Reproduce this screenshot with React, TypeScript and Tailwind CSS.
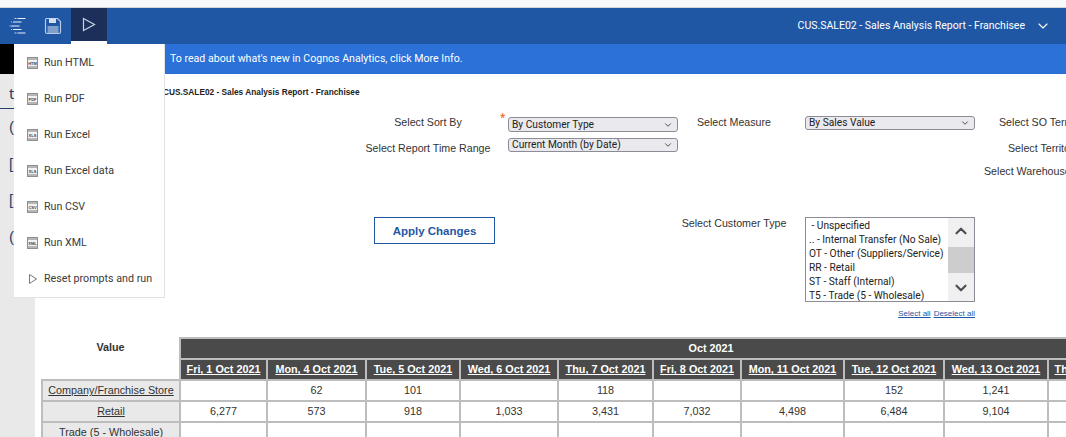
import { ChevronDown, ChevronUp } from "lucide-react"

const uiFont = "font-['Roboto',sans-serif]"
const reportFont = "font-['Liberation_Sans',Arial,sans-serif]"
const fieldFont = "font-['Roboto',sans-serif]"

const runItems = [
  { label: "Run HTML", tag: "HTM" },
  { label: "Run PDF", tag: "PDF" },
  { label: "Run Excel", tag: "XLS" },
  { label: "Run Excel data", tag: "XLS" },
  { label: "Run CSV", tag: "CSV" },
  { label: "Run XML", tag: "XML" },
]

const customerTypes = [
  "\u00a0- Unspecified",
  ".. - Internal Transfer (No Sale)",
  "OT - Other (Suppliers/Service)",
  "RR - Retail",
  "ST - Staff (Internal)",
  "T5 - Trade (5 - Wholesale)",
]

const dates = [
  { label: "Fri, 1 Oct 2021", w: "w-[87px]" },
  { label: "Mon, 4 Oct 2021", w: "w-[99px]" },
  { label: "Tue, 5 Oct 2021", w: "w-[94px]" },
  { label: "Wed, 6 Oct 2021", w: "w-[98px]" },
  { label: "Thu, 7 Oct 2021", w: "w-[95px]" },
  { label: "Fri, 8 Oct 2021", w: "w-[88px]" },
  { label: "Mon, 11 Oct 2021", w: "w-[103px]" },
  { label: "Tue, 12 Oct 2021", w: "w-[100px]" },
  { label: "Wed, 13 Oct 2021", w: "w-[104px]" },
  { label: "Thu, 14 Oct 2021", w: "w-[99px]" },
  { label: "Fri, 15 Oct 2021", w: "w-[95px]" },
]

const rows = [
  { name: "Company/Franchise Store", link: true, values: ["", "62", "101", "", "118", "", "", "152", "1,241", "", ""] },
  { name: "Retail", link: true, values: ["6,277", "573", "918", "1,033", "3,431", "7,032", "4,498", "6,484", "9,104", "", ""] },
  { name: "Trade (5 - Wholesale)", link: false, values: ["", "", "", "", "", "", "", "", "", "", ""] },
]

function FileIcon({ tag }: { tag: string }) {
  return (
    <svg width="12" height="12" viewBox="0 0 12 12" className="shrink-0">
      <rect x="0.5" y="0.5" width="10" height="11" fill="#f2f2f2" stroke="#8f8f8f" />
      <rect x="1" y="1" width="9" height="2" fill="#b5b5b5" />
      <rect x="1" y="9" width="9" height="2" fill="#b5b5b5" />
      <text x="5.5" y="7.6" textAnchor="middle" fontSize="4" fontWeight="700" fill="#444" fontFamily="Liberation Sans">
        {tag}
      </text>
    </svg>
  )
}

function RunMenu() {
  return (
    <div className={`absolute left-[14px] top-[44px] z-20 flex h-[254px] w-[151px] flex-col border-r border-b border-[#e2e2e2] bg-white pt-[1px] ${uiFont}`}>
      {runItems.map((item) => (
        <div key={item.label} className="flex h-[36px] items-center gap-[5px] pl-[13px] text-[10.7px] text-[#3a3a3a]">
          <FileIcon tag={item.tag} />
          {item.label}
        </div>
      ))}
      <div className="flex h-[36px] items-center gap-[5px] pl-[13px] text-[10.7px] text-[#3a3a3a]">
        <svg width="12" height="12" viewBox="0 0 12 12" className="shrink-0" fill="none" stroke="#777">
          <path d="M2.5 1.5v9l7-4.5z" />
        </svg>
        Reset prompts and run
      </div>
    </div>
  )
}

function TopBar() {
  return (
    <header className={`flex h-[36px] items-stretch bg-[#1f57a4] ${uiFont}`}>
      <div className="flex w-[35px] items-center justify-center">
        <svg width="18" height="18" viewBox="0 0 18 18" fill="none" stroke="#eaf0fa" strokeWidth="1.1">
          <path d="M8.5 1.5h8M4 5h8.5M2 9h8.5M4 12.5h8.5M8.5 16h8" />
          <path d="M5.5 1.5h2M2 5h1M0.5 9h1M2 12.5h1M5.5 16h2" stroke="#c3d3ea" />
        </svg>
      </div>
      <div className="flex w-[36px] items-center justify-center">
        <svg width="18" height="18" viewBox="0 0 18 18" fill="none" stroke="#b9cbe6" strokeWidth="1.2">
          <path d="M2.5 1.5h11l3 3v10.5a1.5 1.5 0 0 1-1.5 1.5h-12a1.5 1.5 0 0 1-1.5-1.5v-12a1.5 1.5 0 0 1 1-1.5z" />
          <rect x="5" y="1.5" width="7" height="4.5" fill="#d6e0f0" stroke="none" />
          <rect x="3.5" y="9" width="11" height="7" fill="#7f9fcd" stroke="none" />
        </svg>
      </div>
      <div className="flex w-[36px] flex-col bg-[#1b2f5a]">
        <div className="flex flex-1 items-center justify-center">
          <svg width="14" height="15" viewBox="0 0 14 15" fill="none" stroke="#c9d2e2" strokeWidth="1.2">
            <path d="M1.5 1.5v12l11-6z" />
          </svg>
        </div>
        <div className="h-[3px] bg-white" />
      </div>
      <div className="ml-auto flex items-center pr-[15px] text-[10.5px] text-white">
        CUS.SALE02 - Sales Analysis Report - Franchisee
        <ChevronDown size={16} strokeWidth={1.7} className="ml-[10px]" />
      </div>
    </header>
  )
}

function Notice() {
  return (
    <div className={`flex h-[30px] ${uiFont}`}>
      <div className="w-[14px] bg-black" />
      <div className="flex flex-1 items-center bg-[#2b71d7] pl-[156px] text-[10.6px] text-white">
        To read about what's new in Cognos Analytics, click More Info.
      </div>
    </div>
  )
}

function Sidebar() {
  const marks = ["(", "[", "[", "("]
  return (
    <aside className="flex h-[363px] w-[35px] shrink-0 flex-col bg-[#e9e9e9] pl-[9px] text-[#27406b]">
      <div className="-ml-[9px] h-[35px] w-full border-b border-[#27406b] pl-[9px] pt-[10px] text-[15px] leading-[18px]">t</div>
      <div className={`flex flex-col text-[15px] leading-[36.5px] ${reportFont}`}>
        {marks.map((m, i) => (
          <span key={i} className="h-[36.5px]">{m}</span>
        ))}
      </div>
    </aside>
  )
}

function SelectBox({ value, className }: { value: string; className: string }) {
  return (
    <div className={`flex w-[170px] items-center justify-between rounded-[3px] border border-[#8c8c96] bg-[#e9e9ee] pl-[3px] pr-[4px] text-[10.2px] text-[#222] ${fieldFont} ${className}`}>
      {value}
      <ChevronDown size={10} strokeWidth={2} className="text-[#333]" />
    </div>
  )
}

function CustomerList() {
  return (
    <div>
      <div className={`flex h-[85px] w-[170px] border border-[#8c8c96] bg-white text-[10.2px] leading-[14px] text-[#222] ${fieldFont}`}>
        <div className="flex-1 overflow-hidden whitespace-nowrap pl-[3px] pt-[1px]">
          {customerTypes.map((t) => (
            <div key={t}>{t}</div>
          ))}
        </div>
        <div className="flex w-[26px] flex-col items-center justify-between bg-[#f0f0f0]">
          <ChevronUp size={18} strokeWidth={3} className="mt-[4px] text-[#505050]" />
          <div className="h-[26px] w-[26px] bg-[#cdcdcd]" />
          <ChevronDown size={18} strokeWidth={3} className="mb-[4px] text-[#505050]" />
        </div>
      </div>
      <div className={`mt-[7px] flex w-[170px] justify-end gap-[3px] text-[8px] leading-[10px] text-[#1f57a4] underline ${reportFont}`}>
        <span>Select all</span>
        <span>Deselect all</span>
      </div>
    </div>
  )
}

function PromptForm() {
  return (
    <div className={`ml-[324px] mt-[17px] grid grid-cols-[138px_11px_170px_127px_170px_1fr] grid-rows-[21px_24px_57px_105px] whitespace-nowrap text-[10.67px] leading-[14px] text-[#333] ${reportFont}`}>
      <div className="text-center">Select Sort By</div>
      <div className="-mt-[2px] pl-[3px] text-[14px] leading-[10px] text-[#e8590c]">*</div>
      <SelectBox value="By Customer Type" className="mt-[2px] h-[15px]" />
      <div className="pr-[15px] text-center">Select Measure</div>
      <SelectBox value="By Sales Value" className="mt-[1px] h-[14px]" />
      <div className="pl-[24px]">Select SO Territory</div>

      <div className="pt-[5px] text-center">Select Report Time Range</div>
      <div />
      <SelectBox value="Current Month (by Date)" className="mt-[2px] h-[14px]" />
      <div />
      <div />
      <div className="pl-[33px] pt-[5px]">Select Territory</div>

      <div />
      <div />
      <div />
      <div />
      <div />
      <div className="pl-[9px] pt-[4px]">Select Warehouse</div>

      <div className="pl-[15px]">
        <button className="h-[27px] w-[121px] border border-[#1f57a4] bg-white text-[11.5px] font-bold text-[#1f57a4]">
          Apply Changes
        </button>
      </div>
      <div />
      <div />
      <div className="-mt-[1px] pr-[15px] text-center">Select Customer Type</div>
      <CustomerList />
      <div />
    </div>
  )
}

function SalesTable() {
  return (
    <table className={`ml-[6px] mt-[15px] w-[1200px] table-fixed border-collapse whitespace-nowrap text-center text-[10.8px] text-[#333] ${reportFont}`}>
      <colgroup>
        <col className="w-[138px]" />
        {dates.map((d) => (
          <col key={d.label} className={d.w} />
        ))}
      </colgroup>
      <thead>
        <tr className="h-[21px]">
          <th rowSpan={2} className="pb-[22px] font-bold text-[#333]">Value</th>
          <th colSpan={dates.length} className="border-2 border-[#bdbdbd] bg-[#4a4a4a] font-bold text-white">Oct 2021</th>
        </tr>
        <tr className="h-[21px]">
          {dates.map((d) => (
            <th key={d.label} className="border-2 border-[#bdbdbd] bg-[#4a4a4a] font-bold text-white underline">{d.label}</th>
          ))}
        </tr>
      </thead>
      <tbody>
        {rows.map((r) => (
          <tr key={r.name} className="h-[21px]">
            <td className={`border-2 border-[#bdbdbd] bg-[#e9e9e9] ${r.link ? "underline" : ""}`}>{r.name}</td>
            {r.values.map((v, i) => (
              <td key={i} className="border-2 border-[#bdbdbd]">{v}</td>
            ))}
          </tr>
        ))}
      </tbody>
    </table>
  )
}

export default function App() {
  return (
    <div className="relative h-[437px] w-[1066px] overflow-hidden bg-white">
      <div className="h-[8px] border-b border-[#d4d4d6] bg-[#f8f8fb]" />
      <TopBar />
      <Notice />
      <RunMenu />
      <div className="flex">
        <Sidebar />
        <main className="min-w-0 flex-1">
          <div className={`pl-[128px] pt-[13px] text-[8.3px] font-bold leading-[11px] text-[#222] ${reportFont}`}>
            CUS.SALE02 - Sales Analysis Report - Franchisee
          </div>
          <PromptForm />
          <SalesTable />
        </main>
      </div>
    </div>
  )
}
